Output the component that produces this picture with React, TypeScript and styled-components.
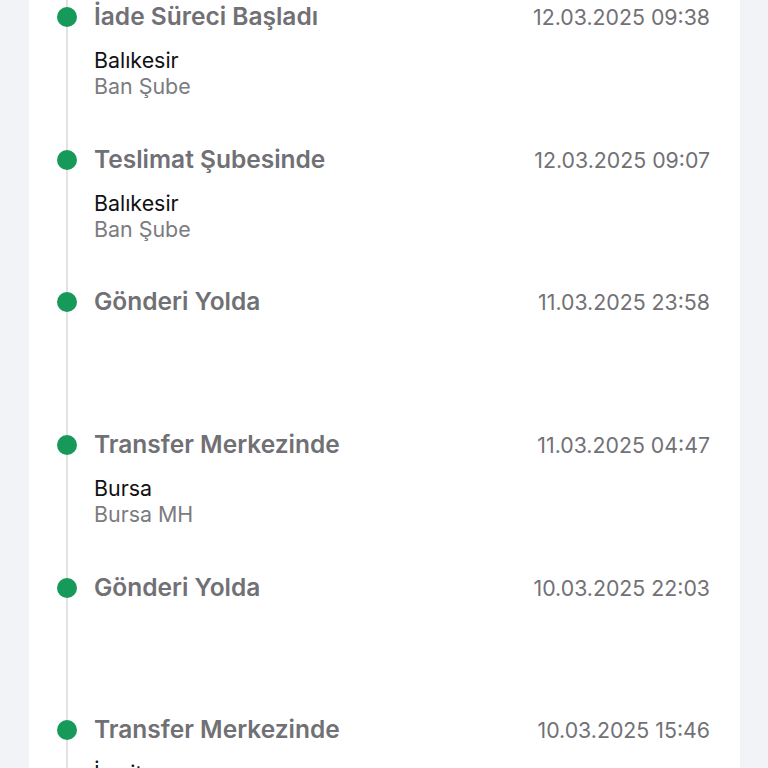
import React from "react";
import styled, { createGlobalStyle } from "styled-components";

interface IEvent {
  title: string;
  date: string;
  city?: string;
  branch?: string;
}

const events: IEvent[] = [
  { title: "İade Süreci Başladı", date: "12.03.2025 09:38", city: "Balıkesir", branch: "Ban Şube" },
  { title: "Teslimat Şubesinde", date: "12.03.2025 09:07", city: "Balıkesir", branch: "Ban Şube" },
  { title: "Gönderi Yolda", date: "11.03.2025 23:58" },
  { title: "Transfer Merkezinde", date: "11.03.2025 04:47", city: "Bursa", branch: "Bursa MH" },
  { title: "Gönderi Yolda", date: "10.03.2025 22:03" },
  { title: "Transfer Merkezinde", date: "10.03.2025 15:46", city: "İzmit", branch: "İzmit Şube" },
];

const Global = createGlobalStyle`
  html, body {
    margin: 0;
    padding: 0;
    background: #f2f3f6;
    height: 768px;
    overflow: hidden;
    font-family: Inter, "Noto Sans", sans-serif;
    -webkit-font-smoothing: antialiased;
  }
`;

const Page = styled.div`
  display: flex;
  height: 768px;
  overflow: hidden;
  padding-left: 29px;
`;

const Card = styled.div`
  width: 711px;
  background: #ffffff;
  padding-top: 3px;
  display: flex;
  flex-direction: column;
`;

const Item = styled.div`
  display: grid;
  grid-template-columns: 65px 1fr;
  height: 142.67px;
  flex-shrink: 0;
  padding-right: 30px;
`;

const Rail = styled.div`
  position: relative;
  &::before {
    content: "";
    position: absolute;
    left: 37px;
    top: -10px;
    bottom: -10px;
    width: 1.5px;
    background: #e2e2e4;
  }
`;

const Dot = styled.span`
  position: absolute;
  left: 28px;
  top: 4px;
  width: 20px;
  height: 20px;
  border-radius: 50%;
  background: #17995a;
`;

const Body = styled.div`
  display: flex;
  flex-direction: column;
`;

const Head = styled.div`
  display: flex;
  justify-content: space-between;
  align-items: baseline;
  height: 26px;
`;

const Title = styled.span`
  font-size: 24.5px;
  line-height: 26px;
  font-weight: 600;
  color: #707075;
`;

const Time = styled.span`
  font-size: 21.3px;
  line-height: 26px;
  color: #717176;
`;

const Place = styled.div`
  margin-top: 18px;
  font-size: 21.4px;
  line-height: 26px;
`;

const City = styled.div`
  color: #111113;
`;

const Branch = styled.div`
  color: #7b7b80;
`;

export default function App() {
  return (
    <>
      <Global />
      <Page>
        <Card>
          {events.map((e, i) => (
            <Item key={i}>
              <Rail>
                <Dot />
              </Rail>
              <Body>
                <Head>
                  <Title>{e.title}</Title>
                  <Time>{e.date}</Time>
                </Head>
                {e.city && (
                  <Place>
                    <City>{e.city}</City>
                    <Branch>{e.branch}</Branch>
                  </Place>
                )}
              </Body>
            </Item>
          ))}
        </Card>
      </Page>
    </>
  );
}
